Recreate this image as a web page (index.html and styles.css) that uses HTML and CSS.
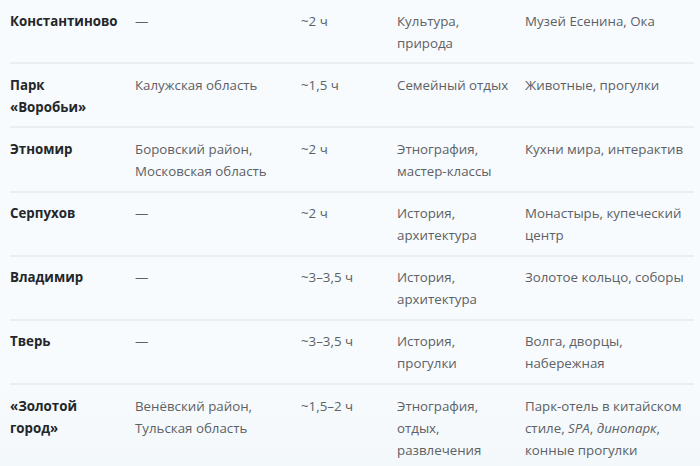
FILE: index.html
```html
<!DOCTYPE html>
<html lang="ru">
<head>
<meta charset="utf-8">
<link rel="stylesheet" href="styles.css">
</head>
<body>
<div class="page">
<table class="trips">
<colgroup>
<col class="c1"><col class="c2"><col class="c3"><col class="c4"><col class="c5">
</colgroup>
<tbody>
<tr><td class="name">Константиново</td><td>—</td><td>~2 ч</td><td>Культура, природа</td><td>Музей Есенина, Ока</td></tr>
<tr><td class="name">Парк «Воробьи»</td><td>Калужская область</td><td>~1,5 ч</td><td>Семейный отдых</td><td>Животные, прогулки</td></tr>
<tr><td class="name">Этномир</td><td>Боровский район, Московская область</td><td>~2 ч</td><td>Этнография, мастер-классы</td><td>Кухни мира, интерактив</td></tr>
<tr><td class="name">Серпухов</td><td>—</td><td>~2 ч</td><td>История, архитектура</td><td>Монастырь, купеческий центр</td></tr>
<tr><td class="name">Владимир</td><td>—</td><td>~3–3,5 ч</td><td>История, архитектура</td><td>Золотое кольцо, соборы</td></tr>
<tr><td class="name">Тверь</td><td>—</td><td>~3–3,5 ч</td><td>История, прогулки</td><td>Волга, дворцы, набережная</td></tr>
<tr class="last"><td class="name">«Золотой город»</td><td>Венёвский район, Тульская область</td><td>~1,5–2 ч</td><td>Этнография, отдых, развлечения</td><td>Парк-отель в китайском стиле, <em>SPA</em>, <em>динопарк</em>, конные прогулки</td></tr>
</tbody>
</table>
</div>
</body>
</html>
```
FILE: styles.css
```css
html, body {
  margin: 0;
  padding: 0;
}
body {
  width: 700px;
  height: 466px;
  overflow: hidden;
  background: linear-gradient(180deg, #f8fbfe 0%, #f8fbfe 80%, #f3f8fb 100%);
  font-family: "Open Sans", "Noto Sans", sans-serif;
  font-size: 13.3px;
  color: #5c6165;
}
.page {
  padding: 0 6px 0 10px;
}
.trips {
  width: 684px;
  border-collapse: collapse;
  table-layout: fixed;
}
.c1 { width: 125px; }
.c2 { width: 166px; }
.c3 { width: 96px; }
.c4 { width: 128px; }
.c5 { width: 169px; }
.trips td {
  vertical-align: top;
  padding: 9.5px 12px 8.7px 0;
  line-height: 22px;
  border-bottom: 2px solid #e9eef1;
}
.trips td:last-child {
  padding-right: 0;
}
.trips tr.last td {
  border-bottom: none;
}
.trips td.name {
  font-weight: 700;
  color: #23272a;
}
.trips em {
  font-style: italic;
}
```
